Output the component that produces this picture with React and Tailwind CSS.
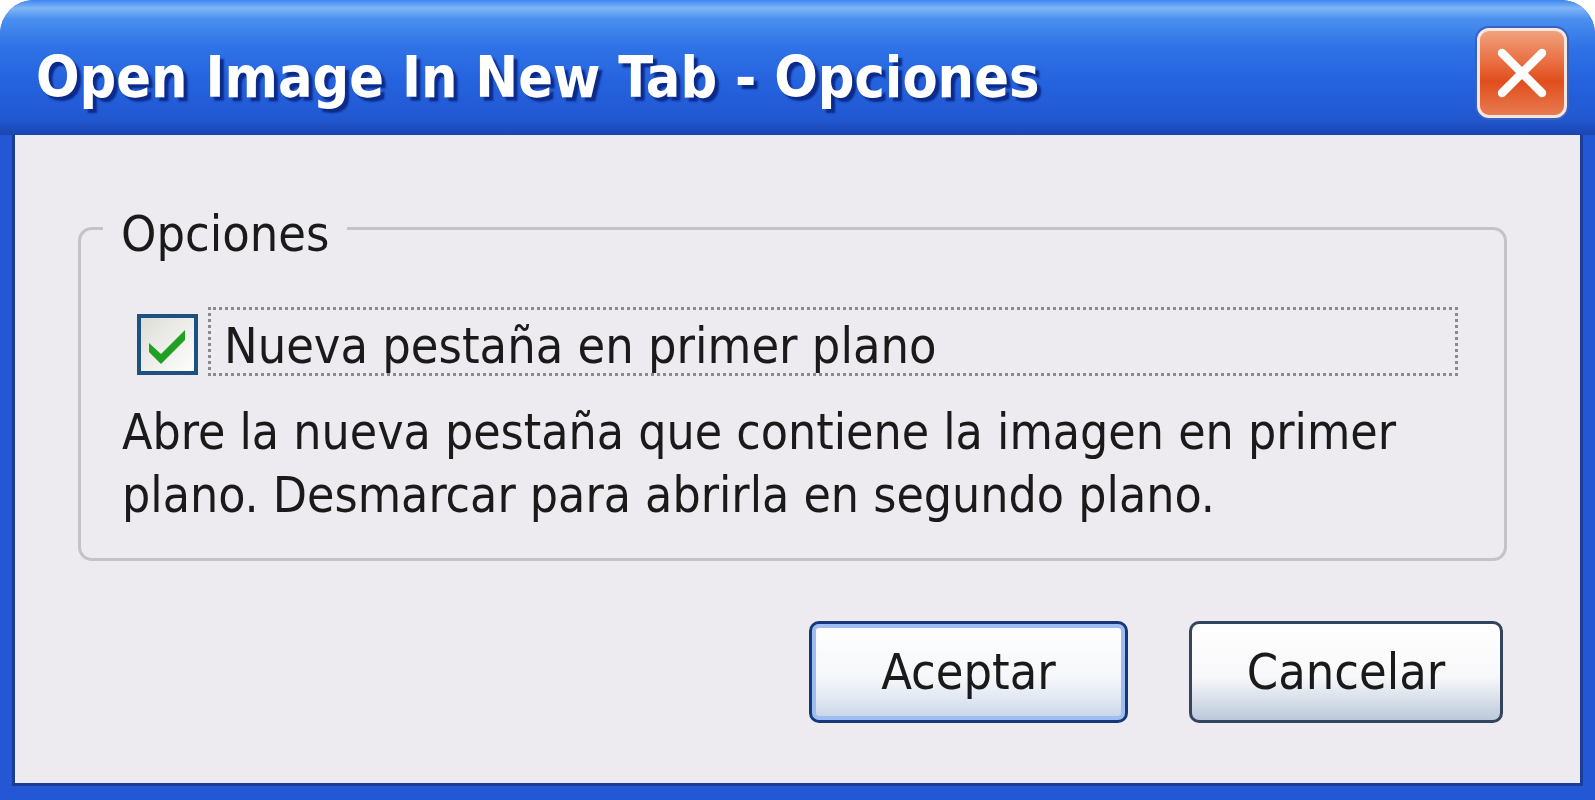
import React from "react";

const bodyFont = { fontFamily: '"DejaVu Sans Condensed", "DejaVu Sans", sans-serif' };

function CloseButton() {
  return (
    <div className="w-[90px] h-[90px] rounded-[12px] border-[3px] border-[#f4e6e0] bg-[linear-gradient(180deg,#f0a27e_0%,#e86a3c_40%,#e04e1c_60%,#e87a50_100%)] flex items-center justify-center shadow-[0_0_0_2px_#3a60c0]">
      <svg width="58" height="58" viewBox="0 0 58 58">
        <path d="M9 9 L49 49 M49 9 L9 49" stroke="#ffffff" strokeWidth="8.5" strokeLinecap="round" />
      </svg>
    </div>
  );
}

function CheckBox() {
  return (
    <svg width="61" height="61" viewBox="0 0 61 61" className="shrink-0">
      <defs>
        <linearGradient id="cbg" x1="0" y1="0" x2="1" y2="1">
          <stop offset="0" stopColor="#dcdcd6" />
          <stop offset="1" stopColor="#ffffff" />
        </linearGradient>
      </defs>
      <rect x="2" y="2" width="57" height="57" fill="url(#cbg)" stroke="#1c5180" strokeWidth="4" />
      <path d="M12 29 L24 40 L48 16 L48 26 L24 50 L12 38 Z" fill="#21a121" />
    </svg>
  );
}

export default function App() {
  return (
    <div className="w-[1595px] h-[800px] bg-white overflow-hidden">
      <div className="w-full h-full rounded-t-[34px] bg-[#2457d4] flex flex-col overflow-hidden">
        {/* Title bar */}
        <div className="h-[135px] shrink-0 flex items-start justify-between pl-[36px] pr-[28px] bg-[linear-gradient(180deg,#3d86f0_0%,#7fb6f6_6%,#4a90f0_14%,#2f72e6_35%,#2563de_60%,#2158d2_88%,#1a45b0_100%)]">
          <div
            className="mt-[49px] text-white text-[57px] leading-none font-bold [text-shadow:4px_4px_2px_#0b2a8a]"
            style={{ fontFamily: '"DejaVu Sans Condensed", "DejaVu Sans", sans-serif' }}
          >
            Open Image In New Tab - Opciones
          </div>
          <div className="mt-[28px]">
            <CloseButton />
          </div>
        </div>
        {/* Body */}
        <div className="flex-1 flex px-[12px] pb-[14px]">
          <div className="flex-1 border-[3px] border-t-0 border-[#1b3d96] bg-[#edebef] flex flex-col pl-[63px] pr-[73px]" style={bodyFont}>
            <fieldset className="mt-[61px] border-[3px] border-[#c4c2c8] rounded-[14px] h-[365px] p-0 text-[#1a1a1a]">
              <legend className="ml-[22px] px-[18px] pt-[12px] text-[50px] leading-[52px] text-[#1a1a1a]">Opciones</legend>
              <div className="pl-[56px] pr-[46px]">
                <div className="flex items-center mt-[47px]">
                  <div className="mt-[6px]">
                    <CheckBox />
                  </div>
                  <div className="ml-[10px] flex-1 h-[69px] border-[3px] border-dotted border-[#8a8a8a] flex items-center pl-[13px] pt-[8px] text-[50px] leading-none">
                    Nueva pestaña en primer plano
                  </div>
                </div>
              </div>
              <div className="pl-[41px] mt-[25px] text-[49.5px] leading-[63px]">
                Abre la nueva pestaña que contiene la imagen en primer
                <br />
                plano. Desmarcar para abrirla en segundo plano.
              </div>
            </fieldset>
            <div className="flex justify-end gap-[61px] mt-[60px] pr-[4px]">
              <button className="w-[319px] h-[102px] rounded-[10px] border-[3px] border-[#14397a] shadow-[inset_0_0_0_4px_#9fbdf0] bg-[linear-gradient(180deg,#ffffff_0%,#f6f7fa_55%,#dfe6f2_80%,#c6d2e6_100%)] text-[50px] text-[#1a1a1a] flex items-center justify-center" style={bodyFont}>
                Aceptar
              </button>
              <button className="w-[314px] h-[102px] rounded-[10px] border-[3px] border-[#34445a] bg-[linear-gradient(180deg,#ffffff_0%,#f8f8fa_55%,#dde3ec_75%,#bcc8da_100%)] text-[50px] text-[#1a1a1a] flex items-center justify-center" style={bodyFont}>
                Cancelar
              </button>
            </div>
          </div>
        </div>
      </div>
    </div>
  );
}
